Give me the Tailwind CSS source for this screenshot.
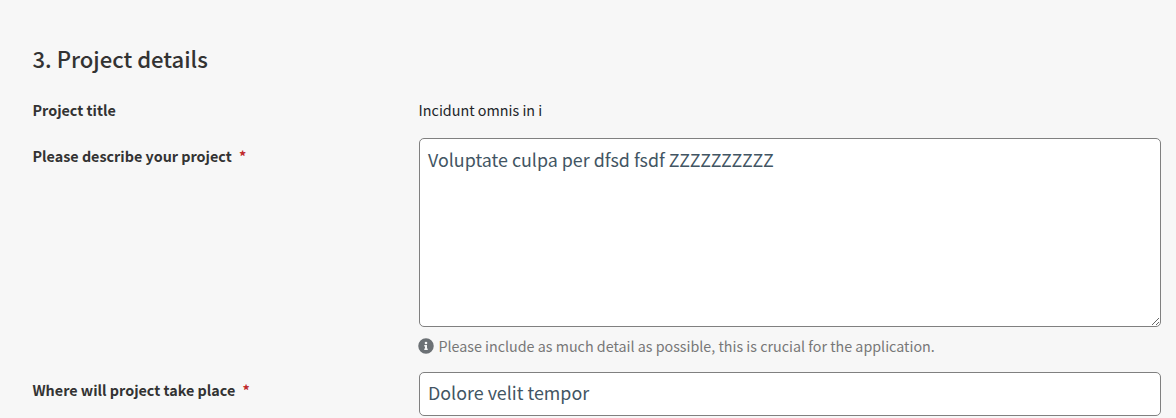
<!DOCTYPE html>
<html lang="en">
<head>
    <meta charset="UTF-8">
    <meta name="viewport" content="width=device-width, initial-scale=1.0">
    <title>Project details</title>
    <script src="https://cdn.jsdelivr.net/npm/@tailwindcss/browser@4"></script>
</head>
<body class="h-screen overflow-hidden bg-[#f7f7f7] font-['Noto_Sans_CJK_SC','Open_Sans',sans-serif] text-[#333]">
    <form class="pl-[32.5px] pr-[15px] pt-[42px]">
        <h2 class="text-[22.1px] leading-8 font-medium">3. Project details</h2>

        <div class="mt-6 grid grid-cols-[386.5px_1fr] text-[14.35px] leading-6">
            <span class="font-bold">Project title</span>
            <span class="-ml-[0.4px] text-[#212529]">Incidunt omnis in i</span>
        </div>

        <div class="mt-4 grid grid-cols-[386.5px_1fr]">
            <label for="description" class="pt-1.5 text-[14.35px] leading-6 font-bold">Please describe your project <span class="ml-1 text-[#c02a2a]">*</span></label>
            <div>
                <textarea id="description" class="block h-[189px] w-full resize-y rounded-[5px] border border-[#808080] bg-white px-2 py-1.5 text-[17.87px] leading-7 text-[#425563] outline-none">Voluptate culpa per dfsd fsdf ZZZZZZZZZZ</textarea>
                <p class="mt-[7px] -ml-[0.6px] flex items-center gap-1 text-[14.3px] leading-6 text-[#777]">
                    <svg class="size-4" viewBox="0 0 512 512" fill="#6c7175"><path d="M256 8a248 248 0 1 0 0 496 248 248 0 0 0 0-496zm0 110a42 42 0 1 1 0 84 42 42 0 0 1 0-84zm56 254c0 7-5 12-12 12h-88c-7 0-12-5-12-12v-24c0-7 5-12 12-12h12v-64h-12c-7 0-12-5-12-12v-24c0-7 5-12 12-12h64c7 0 12 5 12 12v100h12c7 0 12 5 12 12v24z"/></svg>
                    <span>Please include as much detail as possible, this is crucial for the application.</span>
                </p>
            </div>
        </div>

        <div class="mt-[14px] grid grid-cols-[386.5px_1fr]">
            <label for="place" class="pt-1.5 text-[14.35px] leading-6 font-bold">Where will project take place <span class="ml-1 text-[#c02a2a]">*</span></label>
            <input id="place" type="text" value="Dolore velit tempor" class="block h-11 w-full rounded-[5px] border border-[#808080] bg-white px-2 pb-1 text-[17.87px] leading-7 text-[#425563] outline-none">
        </div>
    </form>
</body>
</html>
